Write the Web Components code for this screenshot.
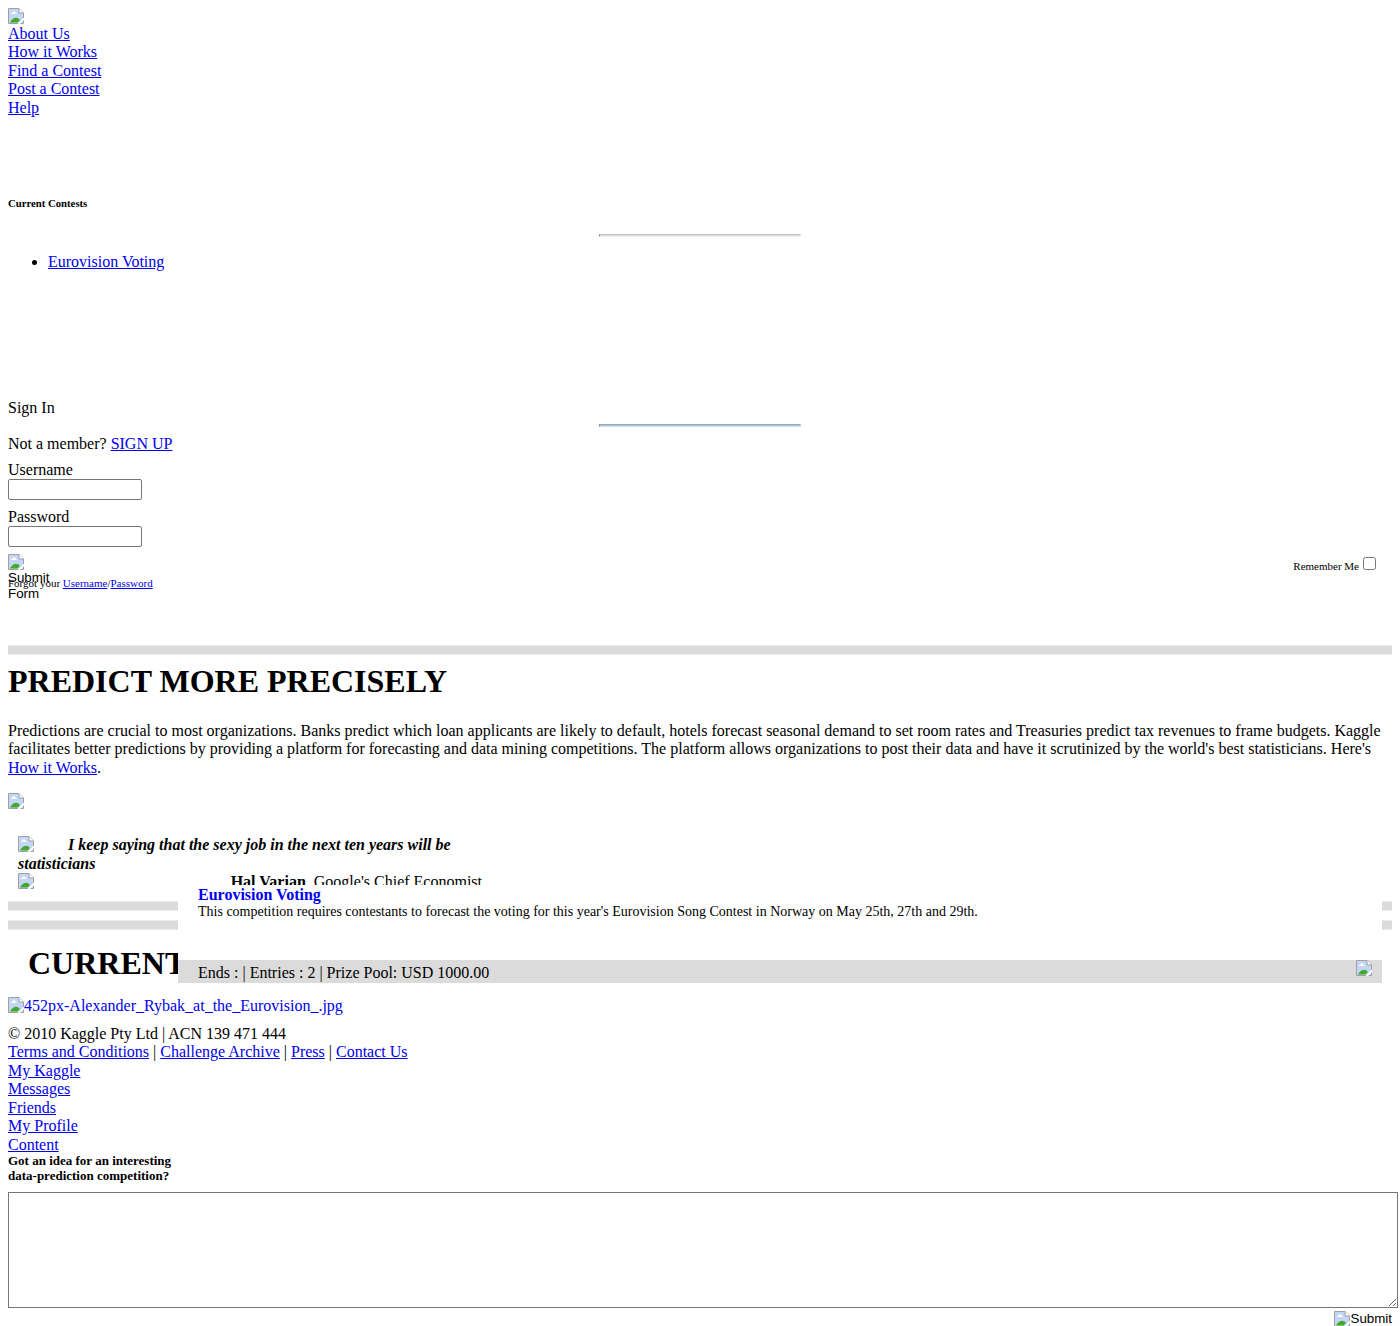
<!DOCTYPE html>
<html lang="en">
<head>
<meta charset="utf-8">
<title>Kaggle</title>
<style>
html{background:#fff}
body{margin:0;font:16px/18.4px "Liberation Serif",serif;color:#000;height:1326px;overflow:hidden}
</style>
</head>
<body>
<kaggle-page></kaggle-page>
<script>
const link = 'a{color:#0000ee;text-decoration:underline}';
const define = (name, html) => customElements.define(name, class extends HTMLElement {
  constructor() {
    super();
    this.attachShadow({mode: 'open'}).innerHTML = html;
  }
});

define('missing-image', `<style>:host{display:inline-block;width:16px;height:16px;flex:none}svg{display:block}</style>
<svg width="16" height="16" viewBox="0 0 16 16">
<path d="M.5.5H11L15.500 5v10.500H.5z" fill="#c3d6f5" stroke="#a0a0a0"/>
<path d="M3 6q0-1.500 1.500-1.500Q5 3 6.200 3.300 7.600 3.500 7.500 4.500 8.800 4.600 8.800 6z" fill="#fff"/>
<path d="M2 14.500Q3.500 11.500 5.500 10.500 8 9 10.500 10.500L12 12 9.500 14.500z" fill="#43a92a"/>
<path d="M11 .5V5h4.500" fill="#fff" stroke="#a0a0a0"/>
<path d="M16 9.500 9.500 16h2.500L16 12z" fill="#fff"/>
</svg>`);

define('grey-bar', `<style>:host{display:block;height:8px;background:#dbdbdb;border:solid #ebebeb;border-width:1px 0}</style>`);

define('short-rule', `<style>:host{display:block;width:200px;height:1px;margin:0 auto;background:var(--mid,#ddd);border:1px solid;border-color:var(--top,#c4c4c4) var(--low,#eee) var(--low,#eee) #8a8a8a}</style>`);

define('link-list', `<style>:host{display:flex;flex-direction:column;align-items:flex-start;line-height:18.500px}</style><slot></slot>`);

define('sign-in', `<style>
:host{display:block;height:246px}${link}
p{margin:0}
short-rule{margin-top:6.900px;--top:#94abc0;--mid:#a9c9e2;--low:#cfe0ee}
input[type=text],input[type=password]{display:block;box-sizing:border-box;width:134px;height:21px;border:1px solid #767676;border-radius:2px;margin:0;background:#fff}
.row{display:flex;justify-content:space-between;height:23px;margin-top:7px}
.submit{width:16px;font:13.333px/16px "Liberation Sans",sans-serif;overflow:visible}
.submit missing-image{display:block}
.submit span{display:block}
.me{display:flex;font-size:11px;line-height:12px;padding:6px 16px 0 0}
.me input{width:13px;height:13px;margin:-3px 0 0 4px}
.forgot{font-size:11px;line-height:13px}
</style>
<p>Sign In</p><short-rule></short-rule>
<p style="margin-top:7.700px">Not a member? <a>SIGN UP</a></p>
<p style="margin-top:7.600px">Username</p><input type="text">
<p style="margin-top:7.600px">Password</p><input type="password">
<div class="row"><div class="submit"><missing-image></missing-image><span>Submit</span><span>Form</span></div>
<label class="me">Remember Me<input type="checkbox"></label></div>
<div class="forgot">Forgot your <a>Username</a>/<a>Password</a></div>`);

define('pull-quote', `<style>
:host{display:block;margin-left:10px;width:476px;height:65px}
div{display:flex}
b{font-style:italic}
missing-image{vertical-align:top}
.by{justify-content:space-between;padding-right:2px}
</style>
<div><missing-image></missing-image><b style="margin-left:34px">I keep saying that the sexy job in the next ten years will be</b></div>
<div><b>statisticians</b></div>
<div class="by"><missing-image></missing-image><span style="margin-right:10px"><strong>Hal Varian</strong>, Google's Chief Economist</span></div>`);

define('contest-card', `<style>
:host{display:flex;flex-direction:column;box-sizing:border-box;position:absolute;left:178px;top:885px;width:1204px;height:98px;background:#fff}
h2{margin:1px 0 0 20px;font:bold 16px/18.400px "Liberation Serif",serif;color:#0000ee}
p{margin:0 0 0 20px;font-size:14px;line-height:16px}
footer{display:flex;justify-content:space-between;height:23px;margin-top:auto;padding:0 10px 0 20px;background:#dbdbdb}
footer span{padding-top:3.500px}
</style>
<h2>Eurovision Voting</h2>
<p>This competition requires contestants to forecast the voting for this year's Eurovision Song Contest in Norway on May 25th, 27th and 29th.</p>
<footer><span>Ends : | Entries : 2 | Prize Pool: USD 1000.00</span><missing-image></missing-image></footer>`);

define('idea-box', `<style>
:host{display:block;width:1390px;margin-top:-1.500px}
h3{margin:0 0 9.500px;font:bold 13px/15px "Liberation Serif",serif}
textarea{display:block;box-sizing:border-box;width:1390px;height:116px;margin:0;border:1px solid #767676;background:#fff}
.send{display:flex;justify-content:flex-end;gap:.4px;margin:3px 6px 0 0;font:13.333px/16px "Liberation Sans",sans-serif}
</style>
<h3>Got an idea for an interesting<br>data-prediction competition?</h3>
<textarea></textarea>
<div class="send"><missing-image></missing-image><span>Submit</span></div>`);

define('kaggle-page', `<style>
:host{display:flow-root;padding:8px 8px 0}${link}
h1{margin:0;font:bold 32px/37px "Liberation Serif",serif}
h6{margin:79.700px 0 0;font:bold 10.720px/13px "Liberation Serif",serif}
ul{margin:15.600px 0 0;padding-left:40px}
p{margin:0}
missing-image{display:block}
.photo{display:flex;color:#0000ee}
</style>
<missing-image></missing-image>
<link-list style="margin-top:.8px"><a>About Us</a><a>How it Works</a><a>Find a Contest</a><a>Post a Contest</a><a>Help</a></link-list>
<h6>Current Contests</h6>
<short-rule style="margin-top:24px"></short-rule>
<ul><li><a>Eurovision Voting</a></li></ul>
<sign-in style="margin-top:127.600px"></sign-in>
<grey-bar></grey-bar>
<h1 style="margin-top:8px">PREDICT MORE PRECISELY</h1>
<p style="margin-top:22.400px">Predictions are crucial to most organizations. Banks predict which loan applicants are likely to default, hotels forecast seasonal demand to set room rates and Treasuries predict tax revenues to frame budgets. Kaggle facilitates better predictions by providing a platform for forecasting and data mining competitions. The platform allows organizations to post their data and have it scrutinized by the world's best statisticians. Here's <a>How it Works</a>.</p>
<missing-image style="margin-top:16px"></missing-image>
<pull-quote style="margin-top:27px"></pull-quote>
<grey-bar></grey-bar><grey-bar style="margin-top:9px"></grey-bar>
<h1 style="margin:15px 0 0 20px">CURRENT</h1>
<div class="photo" style="margin-top:15px"><missing-image></missing-image><span>452px-Alexander_Rybak_at_the_Eurovision_.jpg</span></div>
<p style="margin-top:9.300px">© 2010 Kaggle Pty Ltd | ACN 139 471 444</p>
<p><a>Terms and Conditions</a> | <a>Challenge Archive</a> | <a>Press</a> | <a>Contact Us</a></p>
<link-list><a>My Kaggle</a><a>Messages</a><a>Friends</a><a>My Profile</a><a>Content</a></link-list>
<idea-box></idea-box>
<contest-card></contest-card>`);
</script>
</body>
</html>
